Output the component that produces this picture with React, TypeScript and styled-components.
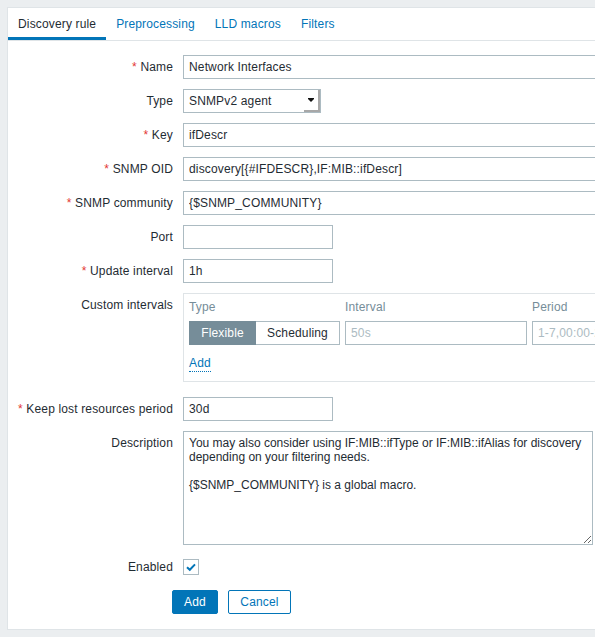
import React from "react";
import styled, { createGlobalStyle } from "styled-components";

const GlobalStyle = createGlobalStyle`
  html, body {
    margin: 0;
    padding: 0;
    background: #ebeef0;
    overflow: hidden;
  }
  body {
    font-family: "Liberation Sans", Arial, sans-serif;
    font-size: 12px;
    letter-spacing: 0.15px;
    color: #1f2c33;
  }
`;

const Page = styled.div`
  box-sizing: border-box;
  width: 720px;
  height: 637px;
  padding: 7px 0 0 7px;
`;

const Panel = styled.div`
  width: 700px;
  background: #ffffff;
  border: 1px solid #dfe4e7;
  border-right: none;
  padding-bottom: 15px;
`;

const TabNav = styled.div`
  display: flex;
  height: 32px;
  border-bottom: 1px solid #dfe4e7;
`;

const Tab = styled.div<{ $active?: boolean }>`
  box-sizing: border-box;
  height: 32px;
  padding: 3px 10px 0;
  line-height: 26px;
  border-bottom: 3px solid ${(p) => (p.$active ? "#0275b8" : "transparent")};
  color: ${(p) => (p.$active ? "#1f2c33" : "#0275b8")};
  white-space: nowrap;
`;

const Content = styled.div`
  padding-top: 9px;
`;

const Row = styled.div<{ $pb?: number }>`
  display: flex;
  align-items: flex-start;
  padding: 5px 0 ${(p) => (p.$pb ?? 5)}px;
`;

const Label = styled.div`
  box-sizing: border-box;
  flex: 0 0 175px;
  padding-right: 10px;
  text-align: right;
  line-height: 24px;
  white-space: nowrap;
`;

const Asterisk = styled.span`
  color: #e33734;
`;

const Field = styled.div`
  flex: 1;
  display: flex;
  align-items: center;
  min-height: 24px;
`;

const TextInput = styled.input<{ $w: number; $muted?: boolean }>`
  box-sizing: border-box;
  width: ${(p) => p.$w}px;
  height: 24px;
  margin: 0;
  padding: 0 5px;
  border: 1px solid #acbbc2;
  border-radius: 0;
  background: #ffffff;
  font-family: "Liberation Sans", Arial, sans-serif;
  font-size: 12px;
  letter-spacing: 0.15px;
  color: ${(p) => (p.$muted ? "#acbbc2" : "#1f2c33")};
  outline: none;
`;

const SelectBox = styled.div`
  box-sizing: border-box;
  width: 138px;
  height: 24px;
  display: flex;
  align-items: stretch;
  border: 1px solid #acbbc2;
  background: #ffffff;
`;

const SelectText = styled.div`
  flex: 1;
  padding-left: 5px;
  line-height: 22px;
`;

const SelectButton = styled.div`
  box-sizing: border-box;
  width: 16px;
  display: flex;
  align-items: center;
  justify-content: center;
  border-right: 2px solid #a8a8a8;
  border-bottom: 2px solid #a8a8a8;
  background: #ffffff;
`;

const Caret = styled.span`
  width: 0;
  height: 0;
  margin-top: 1px;
  border-left: 3px solid transparent;
  border-right: 3px solid transparent;
  border-top: 3px solid #111;
  box-shadow: 0 -1px 0 0 #111;
`;

const IntervalBox = styled.div`
  box-sizing: border-box;
  width: 453px;
  border: 1px solid #dfe4e7;
  padding: 5px 5px 6px 5px;
`;

const IntervalGrid = styled.div`
  display: grid;
  grid-template-columns: 151px 182px 1fr;
  column-gap: 5px;
  align-items: center;
`;

const HeadCell = styled.div`
  color: #768d99;
  line-height: 16px;
  padding-bottom: 6px;
`;

const Segmented = styled.div`
  display: flex;
`;

const SegButton = styled.div<{ $on?: boolean; $w: number }>`
  box-sizing: border-box;
  width: ${(p) => p.$w}px;
  height: 24px;
  line-height: 22px;
  text-align: center;
  border: 1px solid ${(p) => (p.$on ? "#768d99" : "#acbbc2")};
  ${(p) => (p.$on ? "" : "border-left: none;")}
  background: ${(p) => (p.$on ? "#768d99" : "#ffffff")};
  color: ${(p) => (p.$on ? "#ffffff" : "#1f2c33")};
`;

const LinkRow = styled.div`
  margin-top: 6px;
  line-height: 24px;
`;

const DottedLink = styled.span`
  color: #0275b8;
  border-bottom: 1px dotted #0275b8;
  padding-bottom: 1px;
`;

const TextArea = styled.textarea`
  box-sizing: border-box;
  width: 410px;
  height: 114px;
  margin: 0;
  padding: 4px 5px;
  border: 1px solid #acbbc2;
  border-radius: 0;
  font-family: "Liberation Sans", Arial, sans-serif;
  font-size: 12px;
  letter-spacing: 0;
  line-height: 14px;
  color: #1f2c33;
  outline: none;
  display: block;
`;

const CheckBox = styled.span`
  box-sizing: border-box;
  width: 16px;
  height: 16px;
  border: 1px solid #acbbc2;
  background: #ffffff;
  display: flex;
  align-items: center;
  justify-content: center;
`;

const ButtonRow = styled.div`
  display: flex;
  gap: 10px;
  padding: 6px 0 0 164px;
`;

const Button = styled.div<{ $primary?: boolean; $w: number }>`
  box-sizing: border-box;
  width: ${(p) => p.$w}px;
  height: 24px;
  line-height: 22px;
  text-align: center;
  border-radius: 2px;
  border: 1px solid #0275b8;
  background: ${(p) => (p.$primary ? "#0275b8" : "#ffffff")};
  color: ${(p) => (p.$primary ? "#ffffff" : "#0275b8")};
`;

const Req = () => (
  <>
    <Asterisk>*</Asterisk>{" "}
  </>
);

export default function App() {
  return (
    <>
      <GlobalStyle />
      <Page>
        <Panel>
          <TabNav>
            <Tab $active>Discovery rule</Tab>
            <Tab>Preprocessing</Tab>
            <Tab>LLD macros</Tab>
            <Tab>Filters</Tab>
          </TabNav>
          <Content>
            <Row>
              <Label><Req />Name</Label>
              <Field><TextInput $w={453} readOnly value="Network Interfaces" /></Field>
            </Row>
            <Row>
              <Label>Type</Label>
              <Field>
                <SelectBox>
                  <SelectText>SNMPv2 agent</SelectText>
                  <SelectButton><Caret /></SelectButton>
                </SelectBox>
              </Field>
            </Row>
            <Row>
              <Label><Req />Key</Label>
              <Field><TextInput $w={453} readOnly value="ifDescr" /></Field>
            </Row>
            <Row>
              <Label><Req />SNMP OID</Label>
              <Field><TextInput $w={453} readOnly value="discovery[{#IFDESCR},IF:MIB::ifDescr]" /></Field>
            </Row>
            <Row>
              <Label><Req />SNMP community</Label>
              <Field><TextInput $w={453} readOnly value="{$SNMP_COMMUNITY}" /></Field>
            </Row>
            <Row>
              <Label>Port</Label>
              <Field><TextInput $w={150} readOnly value="" /></Field>
            </Row>
            <Row>
              <Label><Req />Update interval</Label>
              <Field><TextInput $w={150} readOnly value="1h" /></Field>
            </Row>
            <Row $pb={10}>
              <Label>Custom intervals</Label>
              <Field>
                <IntervalBox>
                  <IntervalGrid>
                    <HeadCell>Type</HeadCell>
                    <HeadCell>Interval</HeadCell>
                    <HeadCell>Period</HeadCell>
                    <Segmented>
                      <SegButton $on $w={67}>Flexible</SegButton>
                      <SegButton $w={84}>Scheduling</SegButton>
                    </Segmented>
                    <TextInput $w={182} $muted readOnly value="50s" />
                    <TextInput $w={150} $muted readOnly value="1-7,00:00-24:00" />
                  </IntervalGrid>
                  <LinkRow><DottedLink>Add</DottedLink></LinkRow>
                </IntervalBox>
              </Field>
            </Row>
            <Row>
              <Label><Req />Keep lost resources period</Label>
              <Field><TextInput $w={150} readOnly value="30d" /></Field>
            </Row>
            <Row>
              <Label>Description</Label>
              <Field>
                <TextArea
                  readOnly
                  value={
                    "You may also consider using IF:MIB::ifType or IF:MIB::ifAlias for discovery depending on your filtering needs.\n\n{$SNMP_COMMUNITY} is a global macro."
                  }
                />
              </Field>
            </Row>
            <Row>
              <Label>Enabled</Label>
              <Field>
                <CheckBox>
                  <svg width="12" height="12" viewBox="0 0 12 12">
                    <polyline
                      points="2,6.2 4.8,8.8 10,3.4"
                      fill="none"
                      stroke="#0275b8"
                      strokeWidth="2"
                    />
                  </svg>
                </CheckBox>
              </Field>
            </Row>
            <ButtonRow>
              <Button $primary $w={46}>Add</Button>
              <Button $w={63}>Cancel</Button>
            </ButtonRow>
          </Content>
        </Panel>
      </Page>
    </>
  );
}
